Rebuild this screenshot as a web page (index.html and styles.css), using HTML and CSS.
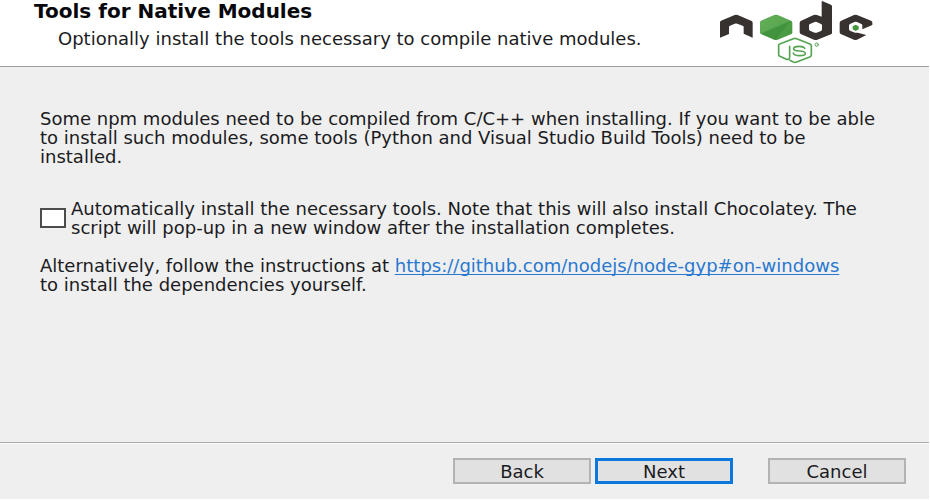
FILE: index.html
```html
<!DOCTYPE html>
<html lang="en">
<head>
<meta charset="utf-8">
<title>Tools for Native Modules</title>
<link rel="stylesheet" href="styles.css">
</head>
<body>
<form class="wizard">
  <header class="banner">
    <div class="heading">
      <h1>Tools for Native Modules</h1>
      <p class="subtitle">Optionally install the tools necessary to compile native modules.</p>
    </div>
    <svg class="logo" viewBox="54 0 480 195" role="img" aria-label="Node.js">
      <defs>
        <linearGradient id="leaf" x1="0" y1="0" x2="1" y2="1">
          <stop offset="0" stop-color="#5cab54"/>
          <stop offset="1" stop-color="#46963f"/>
        </linearGradient>
      </defs>
      <path fill="#373130" d="M60 113V67Q60 64 63 62L104 45Q108 43 113 45L155 63Q158 65 158 68V113L131 101V81Q131 78 128 77L112 71Q108 70 104 71L90 77Q87 78 87 81V102Z"/>
      <path fill="url(#leaf)" d="M180 68Q180 64 183 62L223 45Q228 43 233 45L273 62Q277 64 277 68V98Q277 101 273 103L233 119Q228 121 223 119L183 102Q180 100 180 97Z"/>
      <path fill="#7bbf6c" opacity=".25" d="M223 45Q228 43 233 45L273 62L182 101Q180 100 180 97V68Q180 64 183 62Z"/>
      <path fill="#2f822f" opacity=".4" d="M182 101L273 62L225 120Z"/>
      <path fill="#373130" fill-rule="evenodd" d="M299 69Q299 65 302 63L341 45Q346 43 351 45L365 50V5Q365 2 368 4L393 14Q396 16 396 19V99Q396 102 393 103L352 119Q347 121 342 119L302 102Q299 100 299 97ZM327 76V88Q327 91 330 92L344 98Q347 99 350 98L363 93Q366 91 366 88V76Q366 73 363 72L350 66Q347 65 344 66L330 72Q327 73 327 76Z"/>
      <path fill="#373130" d="M419 69Q419 65 422 63L462 45Q466 43 471 45L513 62Q517 64 517 67V75L487 88V76Q487 73 484 72L471 66Q467 65 463 66L450 72Q447 74 447 77V87Q447 91 450 92L465 98Q468 99 473 98L499 105L471 119Q467 121 462 119L422 102Q419 100 419 97Z"/>
      <path fill="#43963f" d="M467 74L476 79V88L467 93L458 88V79Z"/>
      <g fill="none" stroke="#55a451" stroke-width="5" stroke-linejoin="round" stroke-linecap="round">
        <path d="M269 139V171Q269 180 259 178L238 168Q236 167 236 164V136Q236 133 239 132L280 116Q285 114 290 116L330 132Q334 134 334 137V165Q334 168 331 170L290 186Q285 188 280 186L270 181"/>
        <path d="M314 145Q311 139 297 139Q281 139 281 146Q281 152 297 153Q316 154 316 160Q316 167 299 167Q281 167 280 159"/>
        <circle cx="350" cy="134" r="5" stroke-width="3"/>
      </g>
    </svg>
  </header>
  <main class="content">
    <p class="intro">Some npm modules need to be compiled from C/C++ when installing. If you want to be able<br>to install such modules, some tools (Python and Visual Studio Build Tools) need to be<br>installed.</p>
    <div class="option">
      <input type="checkbox" id="auto">
      <label for="auto">Automatically install the necessary tools. Note that this will also install Chocolatey. The<br>script will pop-up in a new window after the installation completes.</label>
    </div>
    <p>Alternatively, follow the instructions at <a href="https://github.com/nodejs/node-gyp#on-windows">https://github.com/nodejs/node-gyp#on-windows</a><br>to install the dependencies yourself.</p>
  </main>
  <footer class="actions">
    <button type="button">Back</button>
    <button type="button" class="primary">Next</button>
    <button type="button" class="cancel">Cancel</button>
  </footer>
</form>
</body>
</html>
```
FILE: styles.css
```css
* {
  box-sizing: border-box;
}

body {
  margin: 0;
  background: #fff;
  color: #1b1b22;
  font: 18px/19px "DejaVu Sans", Verdana, sans-serif;
}

h1,
p {
  margin: 0;
}

.wizard {
  display: flex;
  flex-direction: column;
  min-height: 100vh;
  background: #efefef;
  border: solid #fff;
  border-width: 0 1px 1px 0;
}

.banner {
  display: flex;
  justify-content: space-between;
  height: 67px;
  padding: 0 51px 0 34px;
  background: #fff;
  border-bottom: 1px solid #a0a0a0;
  white-space: nowrap;
}

.heading {
  padding-top: 2px;
}

h1 {
  color: #08080c;
  font-size: 20px;
  line-height: 19px;
}

.subtitle {
  padding: 8px 0 0 24px;
}

.logo {
  flex: none;
  width: 160px;
  height: 65px;
}

.content {
  flex: 1;
  padding: 42px 40px 0;
  white-space: nowrap;
}

.intro {
  margin-bottom: 33px;
}

.option {
  display: flex;
  align-items: center;
  gap: 5px;
  margin-bottom: 19px;
}

.option input {
  appearance: none;
  flex: none;
  width: 26px;
  height: 20px;
  margin: 0;
  background: #fff;
  border: 2px solid #4c4c4c;
}

.option input:checked {
  background: #0078d7;
}

a {
  color: #2878d0;
  text-underline-offset: 2px;
  text-decoration-skip-ink: none;
}

.actions {
  display: flex;
  justify-content: flex-end;
  gap: 4px;
  height: 57px;
  padding: 15px 23px 0;
  border-top: 1px solid #aaa;
  box-shadow: inset 0 1px #fafafa;
}

button {
  width: 138px;
  height: 26px;
  padding: 0;
  background: #e1e1e1;
  border: 2px solid #b3b3b3;
  color: #1b1b22;
  font: inherit;
}

.primary {
  border: 3px solid #0c78dc;
}

.cancel {
  margin-left: 31px;
}
```
